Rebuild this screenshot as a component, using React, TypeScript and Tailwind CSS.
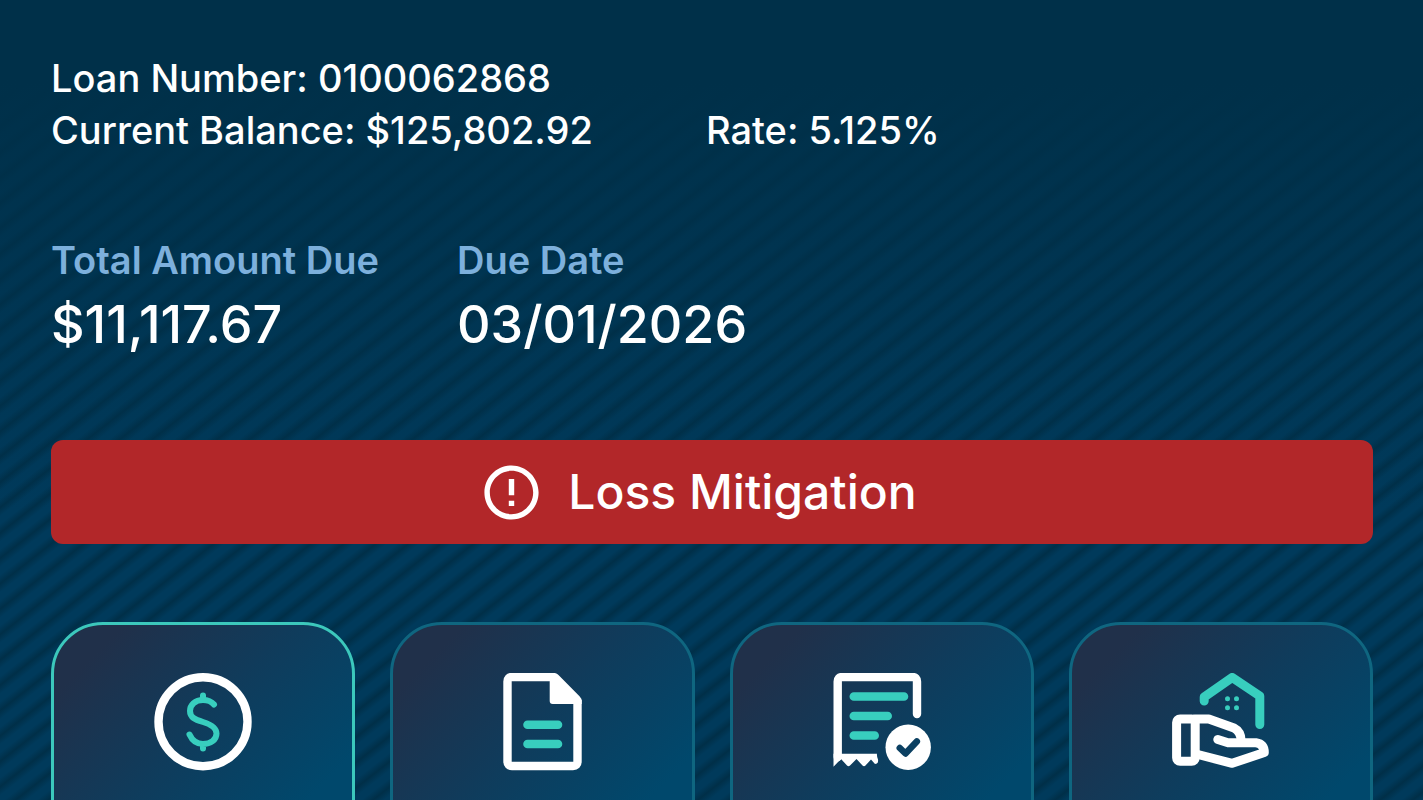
import { MdErrorOutline } from "react-icons/md";

function PaymentIcon() {
  return (
    <svg viewBox="0 0 98 98" className="size-[98px]" fill="none" strokeLinecap="round">
      <circle cx="49" cy="48.7" r="44.5" stroke="#fff" strokeWidth="8.4" />
      <path
        d="M60 31.500C57.500 28.500 54 27 49 27C41 27 36 32 36 38C36 44.500 41 46.500 49 49C57 51.500 62.500 54.500 62.500 60.500C62.500 67 56.500 71 49 71C42 71 38 67 35.500 61.500M49 22.500v4M49 71v4.500"
        stroke="#38cebe"
        strokeWidth="6"
      />
    </svg>
  );
}

function DocumentIcon() {
  return (
    <svg viewBox="0 0 98 98" className="size-[98px]" fill="none" strokeLinecap="round">
      <path
        d="M62 4H19Q14.500 4 14.500 8.500V88.500Q14.500 93 19 93H80Q84.500 93 84.500 88.500V27"
        stroke="#fff"
        strokeWidth="8.4"
        strokeLinecap="butt"
      />
      <path d="M56.700 2V28Q56.700 31 59.700 31H88.700V28Q88.700 25.500 86.500 23.300L65.500 2Q63.500 -0.200 60 -0.200Z" fill="#fff" />
      <path d="M34.500 51.700H65M34.500 71H65" stroke="#38cebe" strokeWidth="8.6" />
    </svg>
  );
}

function ReceiptIcon() {
  return (
    <svg viewBox="0 0 98 98" className="size-[98px]" fill="none" strokeLinecap="round">
      <path d="M4.700 84V8.500Q4.700 4 9.200 4H79.500Q84 4 84 8.500V41" stroke="#fff" strokeWidth="8.4" />
      <path
        d="M0.500 80.700H44Q43.600 83 45 86.500Q45.600 91 42 91L38 86.500L32.500 92.500Q31 94 29.500 92.500L23.500 86L17 92.500Q15.500 94 14 92.500L8 86L0.500 93.700Z"
        fill="#fff"
      />
      <path d="M20.800 23.500H71M20.800 43H54.700M20.800 62.500H41.700" stroke="#38cebe" strokeWidth="8.6" />
      <circle cx="75.200" cy="74.300" r="22.700" fill="#fff" />
      <path d="M66.800 75L72.500 80.500L83.800 68.500" stroke="#0b4062" strokeWidth="6.6" strokeLinejoin="round" />
    </svg>
  );
}

function HomeAssistIcon() {
  return (
    <svg viewBox="0 0 98 98" className="size-[98px]" fill="none" strokeWidth="9" strokeLinecap="round" strokeLinejoin="round">
      <path d="M32.200 28V24L60.200 4.500L87.800 23V51.500" stroke="#38cebe" />
      <g fill="#38cebe">
        <circle cx="55.500" cy="25.700" r="2.500" />
        <circle cx="64.500" cy="25.700" r="2.500" />
        <circle cx="55.500" cy="34.700" r="2.500" />
        <circle cx="64.500" cy="34.700" r="2.500" />
      </g>
      <g stroke="#fff">
        <rect x="4.600" y="46" width="18.600" height="42.300" rx="3.500" />
        <path d="M22.800 46H36.800L62 55Q69 58.500 69.200 68" />
        <path d="M45.800 66.500L56 69.700H84Q92.300 71 92.300 79.500L60.200 90.300L24 81" />
      </g>
    </svg>
  );
}

const actions = [
  { name: "Payments", icon: <PaymentIcon />, active: true },
  { name: "Documents", icon: <DocumentIcon />, active: false },
  { name: "Statements", icon: <ReceiptIcon />, active: false },
  { name: "Home Assistance", icon: <HomeAssistIcon />, active: false },
];

export default function App() {
  return (
    <div className="h-screen overflow-hidden bg-[linear-gradient(180deg,#003049_10%,#00304900_64%),repeating-linear-gradient(142deg,#002f48_0px,#003a5b_7px,#003a5b_13px,#002f48_20px)] font-['Inter',sans-serif] font-medium text-white">
      <main className="pt-[52px] pr-[50px] pl-[51px]">
        {/* Loan details */}
        <section className="text-[38px] leading-[52px]">
          <p>Loan Number: 0100062868</p>
          <div className="flex">
            <p className="w-[655px]">Current Balance: $125,802.92</p>
            <p>Rate: 5.125%</p>
          </div>
        </section>

        {/* Amount due */}
        <dl className="mt-[78px] flex">
          <div className="w-[406px]">
            <dt className="text-[38px] leading-[52px] font-semibold text-[#7db0dc]">Total Amount Due</dt>
            <dd className="text-[52px] leading-[78px]">$11,117.67</dd>
          </div>
          <div>
            <dt className="text-[38px] leading-[52px] font-semibold text-[#7db0dc]">Due Date</dt>
            <dd className="text-[52px] leading-[78px]">03/01/2026</dd>
          </div>
        </dl>

        <button
          type="button"
          className="mt-[76px] flex h-[104px] w-full items-center justify-center gap-6 rounded-xl bg-[#b22729] pr-7 text-[48px]"
        >
          <MdErrorOutline className="size-[65px]" />
          Loss Mitigation
        </button>

        {/* Actions */}
        <nav className="mt-[78px] grid grid-cols-4 gap-[35px]">
          {actions.map((action) => (
            <button
              key={action.name}
              type="button"
              aria-label={action.name}
              className={`flex aspect-square items-start justify-center rounded-[52px] border-3 bg-[linear-gradient(135deg,#20304a_12%,#0f3c5c_42%,#00486c_72%)] pt-12 ${
                action.active ? "border-[#3cc8bc]" : "border-[#0f6680]"
              }`}
            >
              {action.icon}
            </button>
          ))}
        </nav>
      </main>
    </div>
  );
}
